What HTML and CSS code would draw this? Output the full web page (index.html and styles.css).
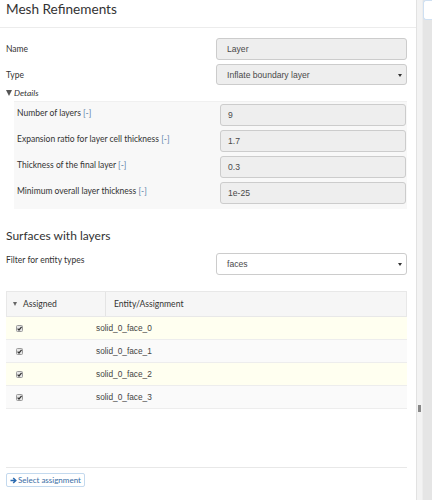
FILE: index.html
```html
<!DOCTYPE html>
<html>
<head>
<meta charset="utf-8">
<link rel="stylesheet" href="styles.css">
</head>
<body>
<div class="app">
  <div class="panel">
    <div class="header"><h1 class="title">Mesh Refinements</h1></div>
    <div class="form">
      <div class="row">
        <label class="label">Name</label>
        <div class="field">Layer</div>
      </div>
      <div class="row">
        <label class="label">Type</label>
        <div class="field select">Inflate boundary layer<span class="caret"></span></div>
      </div>
      <div class="details-summary"><span class="tri"></span><span class="details-title">Details</span></div>
      <div class="details">
        <div class="drow"><span class="dlabel">Number of layers <span class="unit">[-]</span></span><div class="field dfield">9</div></div>
        <div class="drow"><span class="dlabel">Expansion ratio for layer cell thickness <span class="unit">[-]</span></span><div class="field dfield">1.7</div></div>
        <div class="drow"><span class="dlabel">Thickness of the final layer <span class="unit">[-]</span></span><div class="field dfield">0.3</div></div>
        <div class="drow"><span class="dlabel">Minimum overall layer thickness <span class="unit">[-]</span></span><div class="field dfield">1e-25</div></div>
      </div>
      <h2 class="subtitle">Surfaces with layers</h2>
      <div class="row filter-row">
        <label class="label">Filter for entity types</label>
        <div class="field select white">faces<span class="caret"></span></div>
      </div>
      <div class="table">
        <div class="thead">
          <div class="th th1"><span class="sort"></span>Assigned</div>
          <div class="th th2">Entity/Assignment</div>
        </div>
        <div class="tr odd"><span class="cb"><svg width="7" height="7" viewBox="0 0 7 7"><rect x="0.5" y="0.5" width="6" height="6" rx="1" fill="#e6e6e6" stroke="#9a9a9a"/><path d="M1.6 3.6 L3 5 L5.6 1.8" fill="none" stroke="#333" stroke-width="1.2"/></svg></span><span class="ent">solid_0_face_0</span></div>
        <div class="tr even"><span class="cb"><svg width="7" height="7" viewBox="0 0 7 7"><rect x="0.5" y="0.5" width="6" height="6" rx="1" fill="#e6e6e6" stroke="#9a9a9a"/><path d="M1.6 3.6 L3 5 L5.6 1.8" fill="none" stroke="#333" stroke-width="1.2"/></svg></span><span class="ent">solid_0_face_1</span></div>
        <div class="tr odd"><span class="cb"><svg width="7" height="7" viewBox="0 0 7 7"><rect x="0.5" y="0.5" width="6" height="6" rx="1" fill="#e6e6e6" stroke="#9a9a9a"/><path d="M1.6 3.6 L3 5 L5.6 1.8" fill="none" stroke="#333" stroke-width="1.2"/></svg></span><span class="ent">solid_0_face_2</span></div>
        <div class="tr even"><span class="cb"><svg width="7" height="7" viewBox="0 0 7 7"><rect x="0.5" y="0.5" width="6" height="6" rx="1" fill="#e6e6e6" stroke="#9a9a9a"/><path d="M1.6 3.6 L3 5 L5.6 1.8" fill="none" stroke="#333" stroke-width="1.2"/></svg></span><span class="ent">solid_0_face_3</span></div>
      </div>
      <div class="footer">
        <button class="btn"><svg class="arrow" width="7" height="7" viewBox="0 0 7 7"><path d="M0.5 3.5 H5.5 M3.2 1 L5.8 3.5 L3.2 6" fill="none" stroke="#2a6ab0" stroke-width="1.5"/></svg>Select assignment</button>
      </div>
    </div>
  </div>
  <div class="gutter"><div class="thumb"></div></div>
  <div class="side"><div class="sidebtn"></div></div>
</div>
</body>
</html>
```
FILE: styles.css
```css
html, body { margin: 0; padding: 0; background: #fff; }
body { font-family: Lato, "Open Sans", sans-serif; color: #333; }
.app { display: flex; width: 432px; height: 500px; overflow: hidden; }
.panel { width: 416px; border-right: 1px solid #e2e2e2; flex: none; }
.header { border-bottom: 1px solid #ececec; padding: 1px 0 0 6px; box-sizing: border-box; height: 28px; }
.title { margin: 0; font-size: 13.6px; line-height: 17px; font-weight: 400; color: #333; }
.form { padding: 10px 9px 0 6px; }
.row { display: flex; align-items: center; margin-bottom: 4px; height: 22px; }
.row + .row { height: 21px; }
.label { width: 210px; font-size: 8.5px; line-height: 10px; color: #333; }
.field { box-sizing: border-box; width: 191px; height: 22px; background: #eee; border: 1px solid #ccc; border-radius: 3px; font-family: "Liberation Sans", Arial, sans-serif; font-size: 8.6px; color: #4a4a4a; display: flex; align-items: center; padding-left: 10px; position: relative; }
.select { height: 21px; }
.white { background: #fff; }
.caret { position: absolute; right: 4px; top: 9px; width: 0; height: 0; border-left: 2px solid transparent; border-right: 2px solid transparent; border-top: 3px solid #333; }
.details-summary { display: flex; align-items: center; height: 10px; margin-top: -1px; }
.tri { width: 0; height: 0; border-left: 3.5px solid transparent; border-right: 3.5px solid transparent; border-top: 6px solid #555; margin-right: 2px; }
.details-title { font-style: italic; font-size: 8.5px; line-height: 10px; color: #333; }
.details { margin-left: 8px; margin-top: 3px; background: #f8f8f8; padding: 2px 1px 5px 3px; border-top: 1px solid #f0f0f0; height: 108px; box-sizing: border-box; }
.drow { display: flex; align-items: center; justify-content: space-between; margin-bottom: 4px; height: 22px; }
.drow:last-child { margin-bottom: 0; }
.dlabel { font-size: 8.5px; line-height: 10px; color: #333; margin-top: -4px; }
.unit { color: #5a7fa8; }
.dfield { width: 186px; padding-left: 7px; }
.subtitle { margin: 20px 0 0; font-size: 12px; line-height: 14px; font-weight: 400; color: #333; }
.filter-row { margin-top: 10px; align-items: flex-start; }
.filter-row .label { margin-top: 2px; }
.filter-row .field { height: 22px; }
.table { margin-top: 16px; }
.thead { display: flex; height: 26px; background: #f6f6f6; border: 1px solid #e8e8e8; box-sizing: border-box; font-size: 8.6px; color: #333; }
.th { display: flex; align-items: center; }
.th1 { width: 99px; border-right: 1px solid #e4e4e4; padding-left: 6px; box-sizing: border-box; }
.th2 { padding-left: 8px; }
.sort { width: 0; height: 0; border-left: 2.5px solid transparent; border-right: 2.5px solid transparent; border-top: 4px solid #666; margin-right: 6px; }
.tr { display: flex; align-items: center; height: 23px; box-sizing: border-box; border-bottom: 1px solid #ededed; font-family: "Liberation Sans", Arial, sans-serif; font-size: 8.3px; color: #444; }
.odd { background: #fffff0; }
.even { background: #fafafa; }
.cb { width: 10px; margin-left: 10px; display: flex; align-items: center; flex: none; }
.ent { margin-left: 70px; }
.footer { display: flex; margin-top: 58px; border-top: 1px solid #e8e8e8; padding-top: 5px; }
.btn { display: flex; align-items: center; height: 14px; box-sizing: border-box; padding: 0 3px; background: #fff; border: 1px solid #c3d9ee; border-radius: 2px; font-family: Lato, sans-serif; font-size: 8px; color: #3a6ea5; }
.arrow { margin-right: 1px; }
.gutter { width: 5px; background: #f3f3f3; flex: none; position: relative; }
.thumb { position: absolute; left: 1px; top: 405px; width: 3px; height: 7px; background: #888; }
.side { flex: 1; background: #e5e5e5; border-left: 1px solid #ededed; }
.sidebtn { height: 20px; margin: 0 0 7px 0; background: #fff; border: 1px solid #cfe0f2; border-right: none; border-radius: 3px 0 0 3px; box-sizing: border-box; }
```
